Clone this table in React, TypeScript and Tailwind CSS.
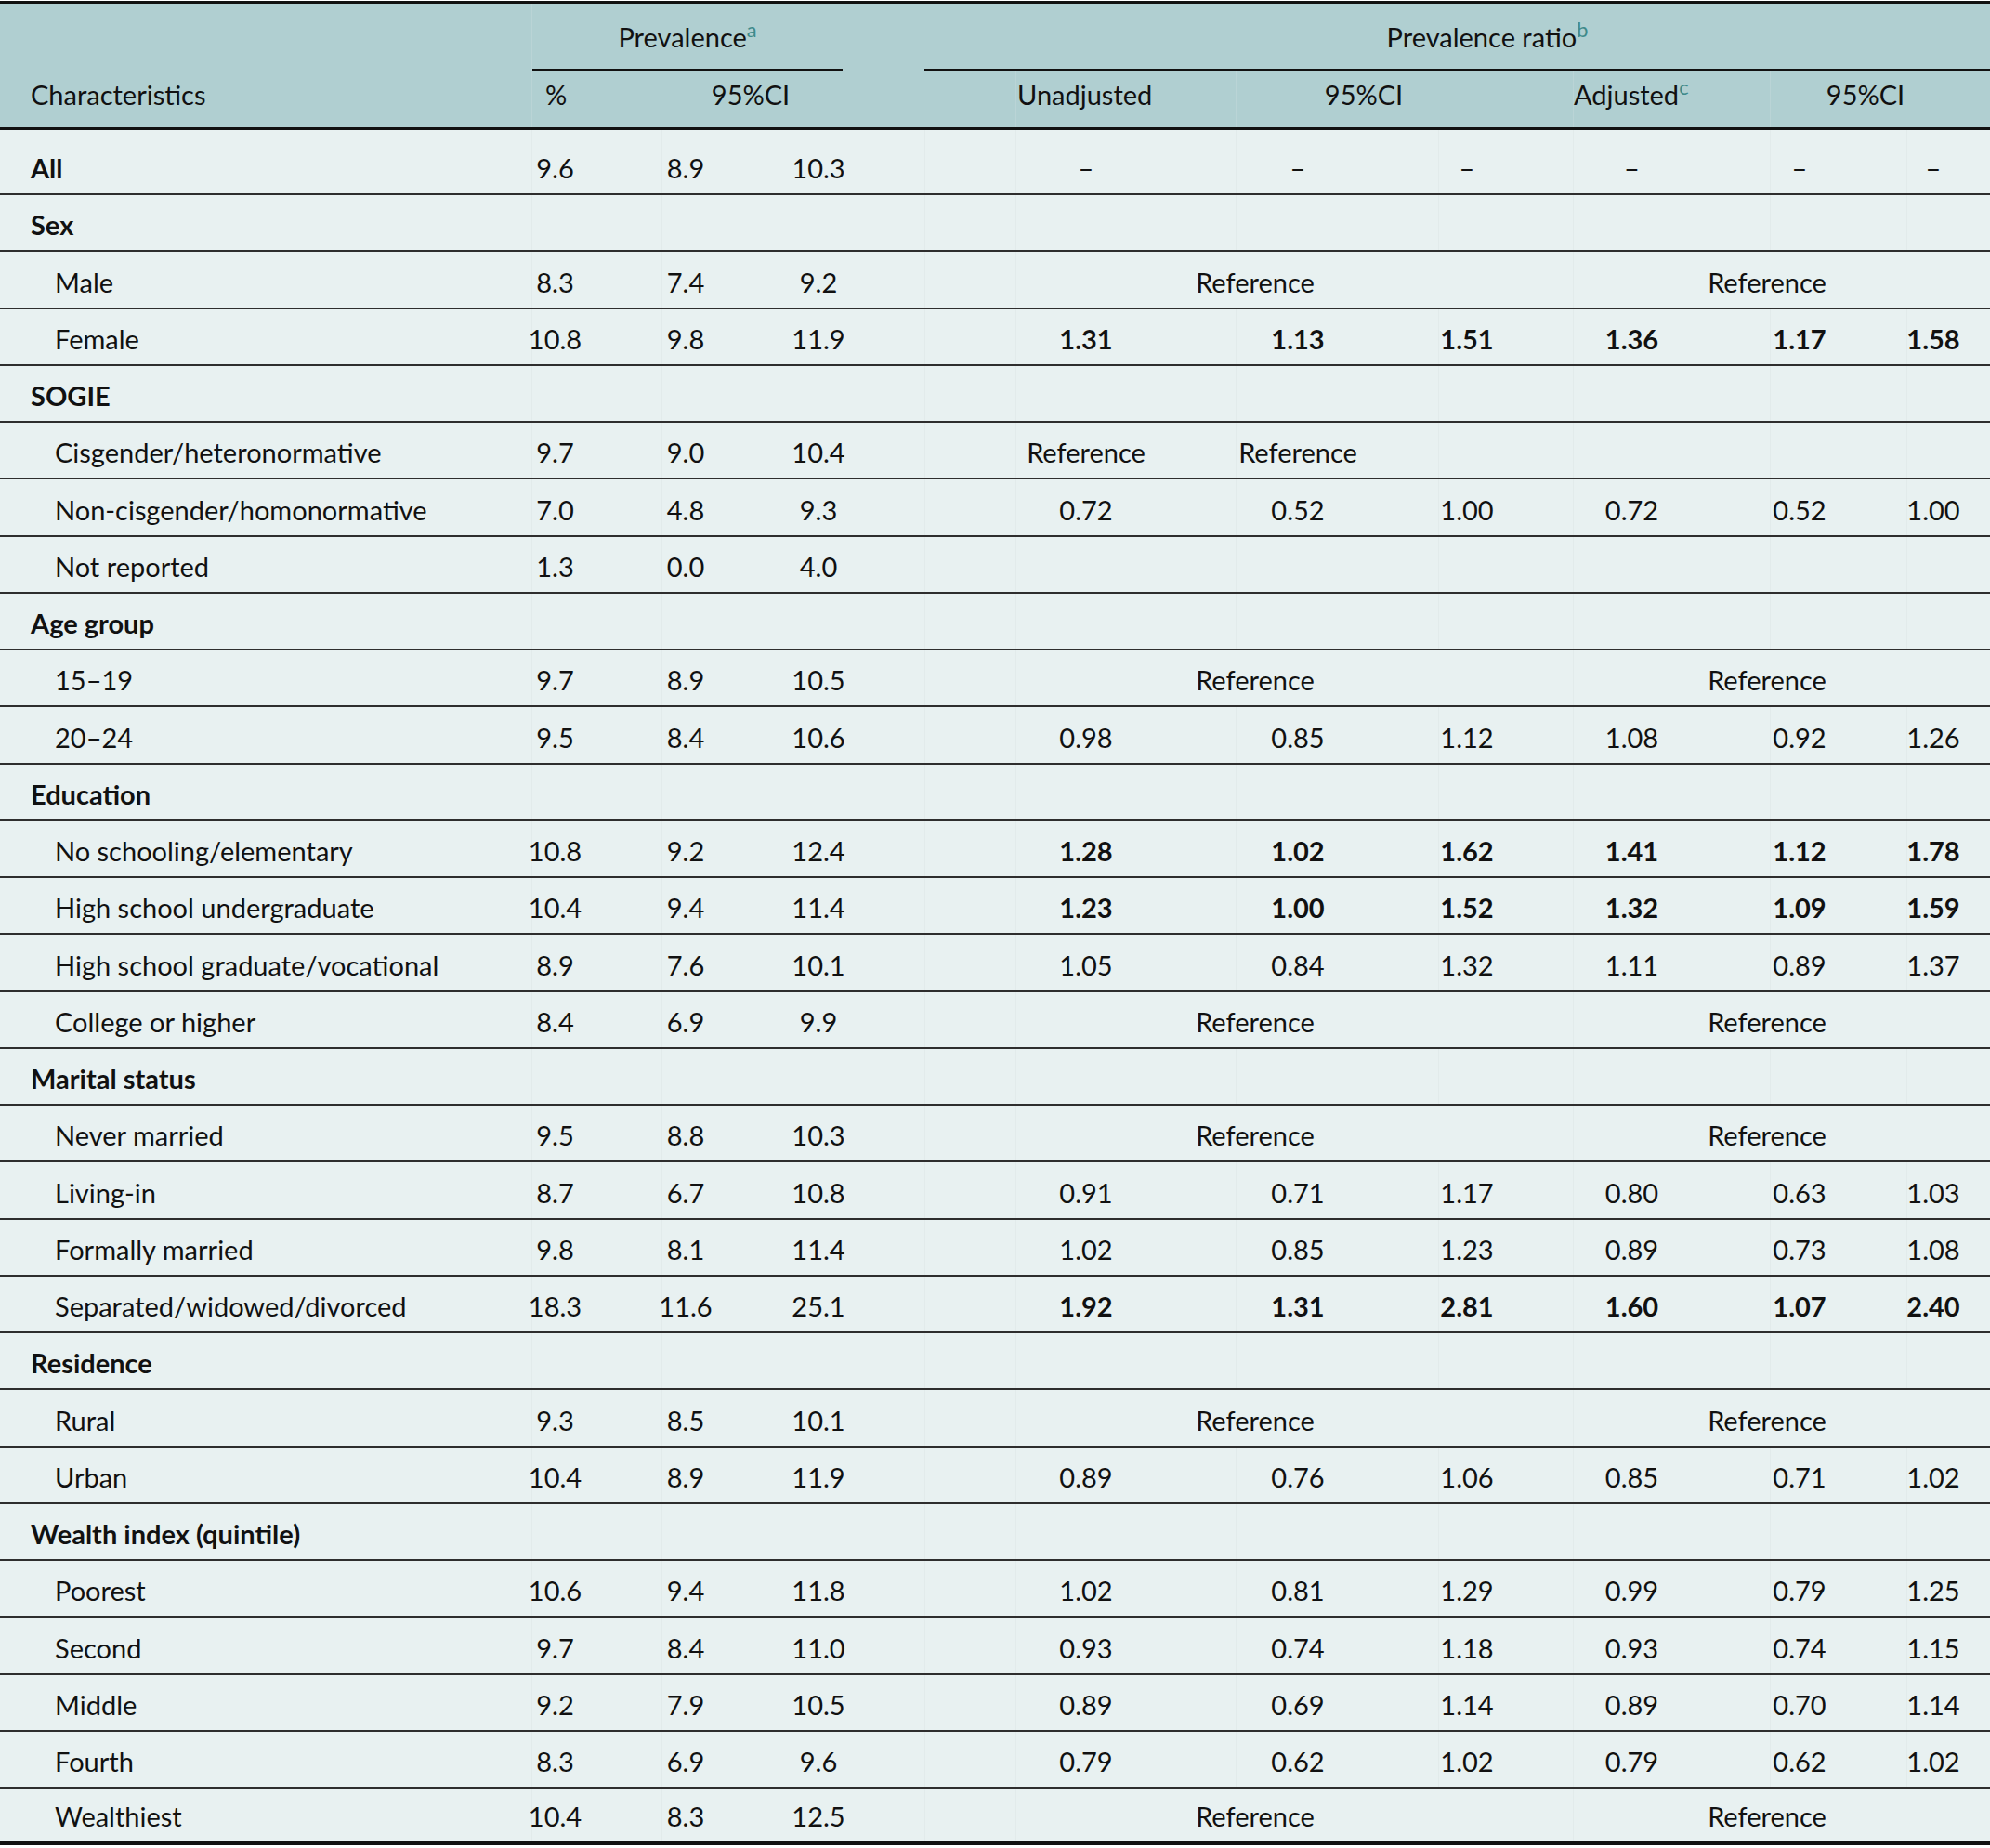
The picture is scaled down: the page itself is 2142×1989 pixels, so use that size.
import React from "react";

const GRID =
  "grid grid-cols-[572px_140px_140px_143px_98px_237px_218px_145px_212px_147px_90px]";

// inner centring boxes for value columns c1..c10 (index 0..9)
const BOX = [
  "w-[49px]",
  "w-[50px]",
  "w-[56px]",
  "w-[0px]",
  "w-[150px]",
  "w-[132px]",
  "w-[60px]",
  "w-[125px]",
  "w-[62px]",
  "w-[56px]",
];

type Row = {
  label: string;
  kind: "cat" | "item" | "all";
  prev?: [string, string, string];
  un?: [string, string, string] | "ref" | "ref2";
  adj?: [string, string, string] | "ref";
  bold?: boolean;
};

const ROWS: Row[] = [
  { label: "All", kind: "all", prev: ["9.6", "8.9", "10.3"], un: ["–", "–", "–"], adj: ["–", "–", "–"] },
  { label: "Sex", kind: "cat" },
  { label: "Male", kind: "item", prev: ["8.3", "7.4", "9.2"], un: "ref", adj: "ref" },
  { label: "Female", kind: "item", prev: ["10.8", "9.8", "11.9"], un: ["1.31", "1.13", "1.51"], adj: ["1.36", "1.17", "1.58"], bold: true },
  { label: "SOGIE", kind: "cat" },
  { label: "Cisgender/heteronormative", kind: "item", prev: ["9.7", "9.0", "10.4"], un: "ref2" },
  { label: "Non-cisgender/homonormative", kind: "item", prev: ["7.0", "4.8", "9.3"], un: ["0.72", "0.52", "1.00"], adj: ["0.72", "0.52", "1.00"] },
  { label: "Not reported", kind: "item", prev: ["1.3", "0.0", "4.0"] },
  { label: "Age group", kind: "cat" },
  { label: "15–19", kind: "item", prev: ["9.7", "8.9", "10.5"], un: "ref", adj: "ref" },
  { label: "20–24", kind: "item", prev: ["9.5", "8.4", "10.6"], un: ["0.98", "0.85", "1.12"], adj: ["1.08", "0.92", "1.26"] },
  { label: "Education", kind: "cat" },
  { label: "No schooling/elementary", kind: "item", prev: ["10.8", "9.2", "12.4"], un: ["1.28", "1.02", "1.62"], adj: ["1.41", "1.12", "1.78"], bold: true },
  { label: "High school undergraduate", kind: "item", prev: ["10.4", "9.4", "11.4"], un: ["1.23", "1.00", "1.52"], adj: ["1.32", "1.09", "1.59"], bold: true },
  { label: "High school graduate/vocational", kind: "item", prev: ["8.9", "7.6", "10.1"], un: ["1.05", "0.84", "1.32"], adj: ["1.11", "0.89", "1.37"] },
  { label: "College or higher", kind: "item", prev: ["8.4", "6.9", "9.9"], un: "ref", adj: "ref" },
  { label: "Marital status", kind: "cat" },
  { label: "Never married", kind: "item", prev: ["9.5", "8.8", "10.3"], un: "ref", adj: "ref" },
  { label: "Living-in", kind: "item", prev: ["8.7", "6.7", "10.8"], un: ["0.91", "0.71", "1.17"], adj: ["0.80", "0.63", "1.03"] },
  { label: "Formally married", kind: "item", prev: ["9.8", "8.1", "11.4"], un: ["1.02", "0.85", "1.23"], adj: ["0.89", "0.73", "1.08"] },
  { label: "Separated/widowed/divorced", kind: "item", prev: ["18.3", "11.6", "25.1"], un: ["1.92", "1.31", "2.81"], adj: ["1.60", "1.07", "2.40"], bold: true },
  { label: "Residence", kind: "cat" },
  { label: "Rural", kind: "item", prev: ["9.3", "8.5", "10.1"], un: "ref", adj: "ref" },
  { label: "Urban", kind: "item", prev: ["10.4", "8.9", "11.9"], un: ["0.89", "0.76", "1.06"], adj: ["0.85", "0.71", "1.02"] },
  { label: "Wealth index (quintile)", kind: "cat" },
  { label: "Poorest", kind: "item", prev: ["10.6", "9.4", "11.8"], un: ["1.02", "0.81", "1.29"], adj: ["0.99", "0.79", "1.25"] },
  { label: "Second", kind: "item", prev: ["9.7", "8.4", "11.0"], un: ["0.93", "0.74", "1.18"], adj: ["0.93", "0.74", "1.15"] },
  { label: "Middle", kind: "item", prev: ["9.2", "7.9", "10.5"], un: ["0.89", "0.69", "1.14"], adj: ["0.89", "0.70", "1.14"] },
  { label: "Fourth", kind: "item", prev: ["8.3", "6.9", "9.6"], un: ["0.79", "0.62", "1.02"], adj: ["0.79", "0.62", "1.02"] },
  { label: "Wealthiest", kind: "item", prev: ["10.4", "8.3", "12.5"], un: "ref", adj: "ref" },
];

const CELL = "flex items-end pb-[10px] border-l border-[#e2ebeb]";

function Val({ idx, v, bold }: { idx: number; v?: string; bold?: boolean }) {
  return (
    <div className={CELL}>
      <div className={`${BOX[idx]} flex justify-center whitespace-nowrap ${bold ? "font-bold" : ""}`}>
        {v ?? ""}
      </div>
    </div>
  );
}

function BodyRow({ r, i, last }: { r: Row; i: number; last: boolean }) {
  const h = i === 0 ? "h-[70px]" : "h-[61.25px]";
  const border = last ? "border-b-[4px] border-[#111]" : "border-b-2 border-[#2e2e2e]";
  const cells: React.ReactNode[] = [];
  const pv = r.prev;
  for (let k = 0; k < 3; k++) cells.push(<Val key={`p${k}`} idx={k} v={pv ? pv[k] : undefined} />);
  cells.push(<Val key="gap" idx={3} />);
  if (r.un === "ref") {
    cells.push(
      <div key="uref" className={`${CELL} col-span-3`}>
        <div className="w-[514px] flex justify-center">Reference</div>
      </div>
    );
  } else if (r.un === "ref2") {
    cells.push(<Val key="u0" idx={4} v="Reference" />);
    cells.push(<Val key="u1" idx={5} v="Reference" />);
    cells.push(<Val key="u2" idx={6} />);
  } else {
    for (let k = 0; k < 3; k++)
      cells.push(<Val key={`u${k}`} idx={4 + k} v={r.un ? r.un[k] : undefined} bold={r.bold} />);
  }
  if (r.adj === "ref") {
    cells.push(
      <div key="aref" className={`${CELL} col-span-3`}>
        <div className="w-[416px] flex justify-center">Reference</div>
      </div>
    );
  } else {
    for (let k = 0; k < 3; k++)
      cells.push(<Val key={`a${k}`} idx={7 + k} v={r.adj ? r.adj[k] : undefined} bold={r.bold} />);
  }
  const labelCls =
    r.kind === "item" ? "pl-[59px]" : "pl-[33px] font-bold";
  return (
    <div className={`${GRID} ${h} ${border}`}>
      <div className={`flex items-end pb-[10px] whitespace-nowrap ${labelCls}`}>{r.label}</div>
      {cells}
    </div>
  );
}

const HCELL = "flex items-end pb-[18px] border-l border-[#bad4d6]";
const SUP = "text-[#3f8a8a]";

export default function App() {
  return (
    <div className="w-[2142px] h-[1989px] bg-white font-['Lato','Noto_Sans',sans-serif] text-[29px] leading-[34px] text-[#111]">
      <div className="pt-[1px]">
        {/* header */}
        <div className={`${GRID} grid-rows-[72px_61px] bg-[#b0cfd1] border-t-[3px] border-b-[3px] border-[#111]`}>
          <div className="row-span-2 flex items-end pb-[18px] pl-[33px]">Characteristics</div>
          <div className="col-span-3 border-l border-[#bad4d6]">
            <div className="w-[334px] h-full border-b-2 border-[#111] flex items-end justify-center pb-[17px]">
              <span>
                Prevalence<sup className={SUP}>a</sup>
              </span>
            </div>
          </div>
          <div className="border-b-2 border-[#111]" />
          <div className="col-span-6 border-b-2 border-[#111] flex items-end justify-center pb-[17px] pr-[33px]">
            <span>
              Prevalence ratio<sup className={SUP}>b</sup>
            </span>
          </div>

          <div className={HCELL}>
            <div className="w-[51px] flex justify-center">%</div>
          </div>
          <div className={`${HCELL} col-span-2 border-l-0`}>
            <div className="w-[192px] flex justify-center">95%CI</div>
          </div>
          <div className="" />
          <div className={`${HCELL} pl-[1px]`}>Unadjusted</div>
          <div className={`${HCELL} col-span-2`}>
            <div className="w-[274px] flex justify-center">95%CI</div>
          </div>
          <div className={HCELL}>
            <span>
              Adjusted<sup className={SUP}>c</sup>
            </span>
          </div>
          <div className={`${HCELL} col-span-2`}>
            <div className="w-[204px] flex justify-center">95%CI</div>
          </div>
        </div>

        {/* body */}
        <div className="bg-[#e8f1f1]">
          {ROWS.map((r, i) => (
            <BodyRow key={i} r={r} i={i} last={i === ROWS.length - 1} />
          ))}
        </div>
      </div>
    </div>
  );
}
